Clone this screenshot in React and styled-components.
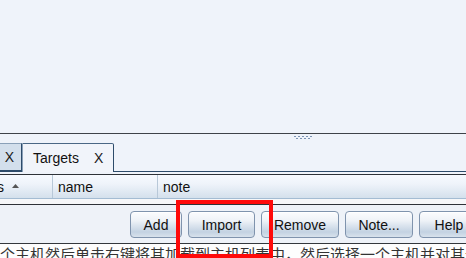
import React from 'react';
import styled, { createGlobalStyle } from 'styled-components';

const GlobalStyle = createGlobalStyle`
  html, body {
    margin: 0;
    padding: 0;
    background: #eff3fa;
    overflow: hidden;
  }
  body {
    font-family: "Liberation Sans", Arial, sans-serif;
  }
`;

const Frame = styled.div`
  width: 466px;
  height: 258px;
  overflow: hidden;
  position: relative;
  display: flex;
  flex-direction: column;
  background: #eff3fa;
`;

const TopArea = styled.div`
  height: 133px;
  flex: none;
  background: #eff3fa;
`;

const Splitter = styled.div`
  height: 10px;
  flex: none;
  border-top: 1px solid #3e4248;
  display: flex;
  align-items: flex-start;
  padding: 2px 0 0 294px;
  box-sizing: border-box;
`;

const Grip = styled.svg`
  display: block;
`;

const TabStrip = styled.div`
  height: 29px;
  flex: none;
  display: flex;
  align-items: flex-end;
  border-bottom: 1px solid #2d4b6a;
  box-sizing: border-box;
`;

const Tab = styled.div`
  box-sizing: border-box;
  display: flex;
  align-items: center;
  gap: 15px;
  font-size: 14px;
  color: #111;
  padding: 0 ${(p) => (p.$cut ? '7px' : '10px')};
  margin-bottom: ${(p) => (p.$active ? '-1px' : '0')};
  height: ${(p) => (p.$active ? '29px' : '28px')};
  background: ${(p) => (p.$active ? '#f1f4fa' : '#d3dfec')};
  border: 1px solid #2d4b6a;
  border-left: ${(p) => (p.$cut ? 'none' : '1px solid #8aa0b8')};
  border-bottom: ${(p) => (p.$active ? 'none' : '1px solid #2d4b6a')};
  border-top-color: ${(p) => (p.$active ? '#4a6785' : '#8aa0b8')};
  border-radius: ${(p) => (p.$active ? '0 2px 0 0' : '0')};
  ${(p) => (p.$cut ? 'margin-left: -1px; width: 23px; justify-content: flex-end;' : 'margin-left: 0;')}
`;

const Close = styled.span`
  font-size: 14px;
  color: #1a1a1a;
`;

const TableBox = styled.div`
  flex: none;
  margin-top: 2px;
  border-top: 1px solid #2e3238;
  border-bottom: 1px solid #2e3238;
  background: #f6f7f9;
  height: 31px;
  box-sizing: border-box;
`;

const Header = styled.div`
  height: 24px;
  display: flex;
  background: linear-gradient(#f7faff 0%, #eef3fa 40%, #d4e0ec 100%);
  border-bottom: 1px solid #a4bcd3;
  box-sizing: border-box;
`;

const HeadCell = styled.div`
  width: ${(p) => p.$w}px;
  flex: none;
  display: flex;
  align-items: center;
  gap: 8px;
  font-size: 14px;
  color: #111;
  padding-left: ${(p) => p.$pad}px;
  box-sizing: border-box;
  border-right: 1px solid #b8c8d8;
  &:last-child {
    border-right: none;
    flex: 1;
  }
`;

const ColName = styled.span`
  margin-left: ${(p) => p.$shift || 0}px;
`;

const SortArrow = styled.svg`
  display: block;
  margin-top: -1px;
`;

const ButtonBar = styled.div`
  flex: none;
  height: 39px;
  display: flex;
  align-items: center;
  gap: 6px;
  padding: 0 0 0 130px;
  border-bottom: 1px solid #33373c;
  box-sizing: border-box;
  background: #eef2f8;
`;

const Button = styled.button`
  flex: none;
  height: 27px;
  width: ${(p) => p.$w}px;
  padding: 0;
  font-family: "Liberation Sans", Arial, sans-serif;
  font-size: 14px;
  color: #111;
  border: 1px solid #7f93ad;
  border-radius: 4px;
  background: linear-gradient(
    #fbfcfe 0%,
    #eef2f7 35%,
    #dfe7f0 50%,
    #c3d2e2 80%,
    #d8e2ec 100%
  );
  box-shadow: inset 0 1px 0 #ffffff;
  margin-top: 1px;
`;

const Doc = styled.div`
  flex: 1;
  overflow: hidden;
  background: #fdfdfd;
`;

const DocText = styled.div`
  font-family: "Noto Sans CJK SC", sans-serif;
  font-size: 15px;
  line-height: 20px;
  color: #333;
  white-space: nowrap;
  margin-top: 0;
`;

const Highlight = styled.div`
  position: absolute;
  left: 176px;
  top: 200px;
  width: 97px;
  height: 58px;
  border: 4px solid #ff0a0a;
  box-sizing: border-box;
  pointer-events: none;
`;

export default function App() {
  return (
    <>
      <GlobalStyle />
      <Frame>
        <TopArea />
        <Splitter>
          <Grip width="18" height="4" viewBox="0 0 18 4">
            {[0, 4, 8, 12, 16].map((x) => (
              <rect key={'a' + x} x={x} y="0" width="2" height="1" fill="#7d94b4" />
            ))}
            {[2, 6, 10, 14].map((x) => (
              <rect key={'b' + x} x={x} y="2" width="2" height="1" fill="#7d94b4" />
            ))}
          </Grip>
        </Splitter>
        <TabStrip>
          <Tab $cut>
            <Close>X</Close>
          </Tab>
          <Tab $active>
            <span>Targets</span>
            <Close>X</Close>
          </Tab>
        </TabStrip>
        <TableBox>
          <Header>
            <HeadCell $w={53} $pad={0}>
              <ColName $shift={-3}>s</ColName>
              <SortArrow width="7" height="4" viewBox="0 0 7 4">
                <path d="M3.5 0 L7 4 L0 4 Z" fill="#555" />
              </SortArrow>
            </HeadCell>
            <HeadCell $w={105} $pad={5}>
              <ColName>name</ColName>
            </HeadCell>
            <HeadCell $pad={5}>
              <ColName>note</ColName>
            </HeadCell>
          </Header>
        </TableBox>
        <ButtonBar>
          <Button $w={52}>Add</Button>
          <Button $w={67}>Import</Button>
          <Button $w={78}>Remove</Button>
          <Button $w={68}>Note...</Button>
          <Button $w={60}>Help</Button>
        </ButtonBar>
        <Doc>
          <DocText>个主机然后单击右键将其加载到主机列表中，然后选择一个主机并对其进行扫描以获得主机信息</DocText>
        </Doc>
        <Highlight />
      </Frame>
    </>
  );
}
